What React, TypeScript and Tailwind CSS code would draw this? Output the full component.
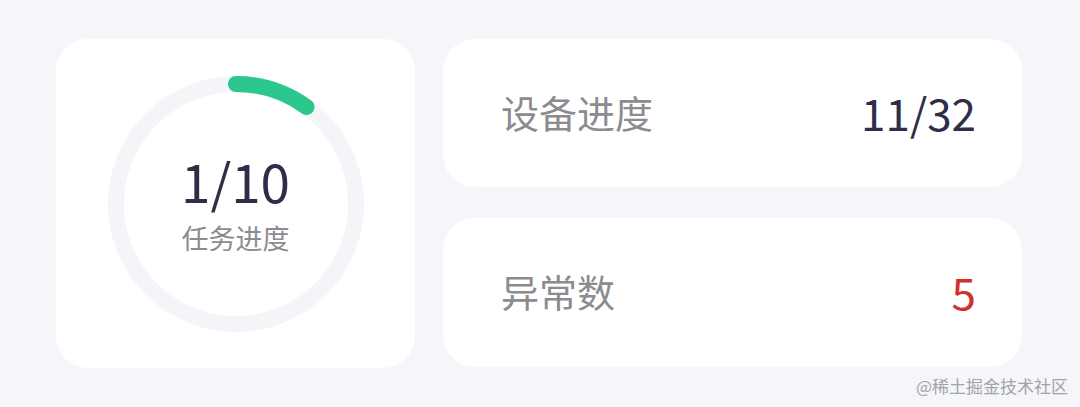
import React from "react";

const FONT = { fontFamily: '"Noto Sans CJK SC", "Noto Sans", sans-serif' };

function ProgressRing({ done, total }: { done: number; total: number }) {
  const r = 120;
  const c = 2 * Math.PI * r;
  const frac = done / total;
  return (
    <div className="relative w-[256px] h-[256px] flex items-center justify-center">
      <svg className="absolute inset-0" width="256" height="256" viewBox="0 0 256 256">
        <circle cx="128" cy="128" r={r} fill="none" stroke="#f4f5f8" strokeWidth="16" />
        <circle
          cx="128"
          cy="128"
          r={r}
          fill="none"
          stroke="#2cc78c"
          strokeWidth="16"
          strokeLinecap="round"
          strokeDasharray={`${c * frac} ${c}`}
          transform="rotate(-90 128 128)"
        />
      </svg>
      <div className="relative flex flex-col items-center gap-[17px] mb-[2px]">
        <p className="text-[53px] leading-none text-[#2e2e48]">
          {done}/{total}
        </p>
        <p className="text-[27px] leading-none text-[#8b8b90]">任务进度</p>
      </div>
    </div>
  );
}

function StatCard({ label, value, valueClass, h }: { label: string; value: string; valueClass: string; h: string }) {
  return (
    <div className={`bg-white rounded-[32px] ${h} flex items-center justify-between pl-[58px] pr-[46px] pb-[3px]`}>
      <span className="text-[38px] leading-none text-[#8b8b90]">{label}</span>
      <span className={`text-[44px] leading-none ${valueClass}`}>{value}</span>
    </div>
  );
}

export default function App() {
  return (
    <div className="relative w-[1080px] h-[407px] bg-[#f5f6fa] pt-[39px] pl-[56px] flex gap-[28px]" style={FONT}>
      <div className="w-[359px] h-[329px] bg-white rounded-[32px] flex items-center justify-center">
        <ProgressRing done={1} total={10} />
      </div>
      <div className="w-[579px] flex flex-col gap-[31px]">
        <StatCard label="设备进度" value="11/32" valueClass="text-[#2e2e48]" h="h-[148px]" />
        <StatCard label="异常数" value="5" valueClass="text-[#d3302c]" h="h-[149px]" />
      </div>
      <span className="absolute right-[12px] bottom-[13px] text-[17px] leading-none text-[#a3a3a8]">
        @稀土掘金技术社区
      </span>
    </div>
  );
}
